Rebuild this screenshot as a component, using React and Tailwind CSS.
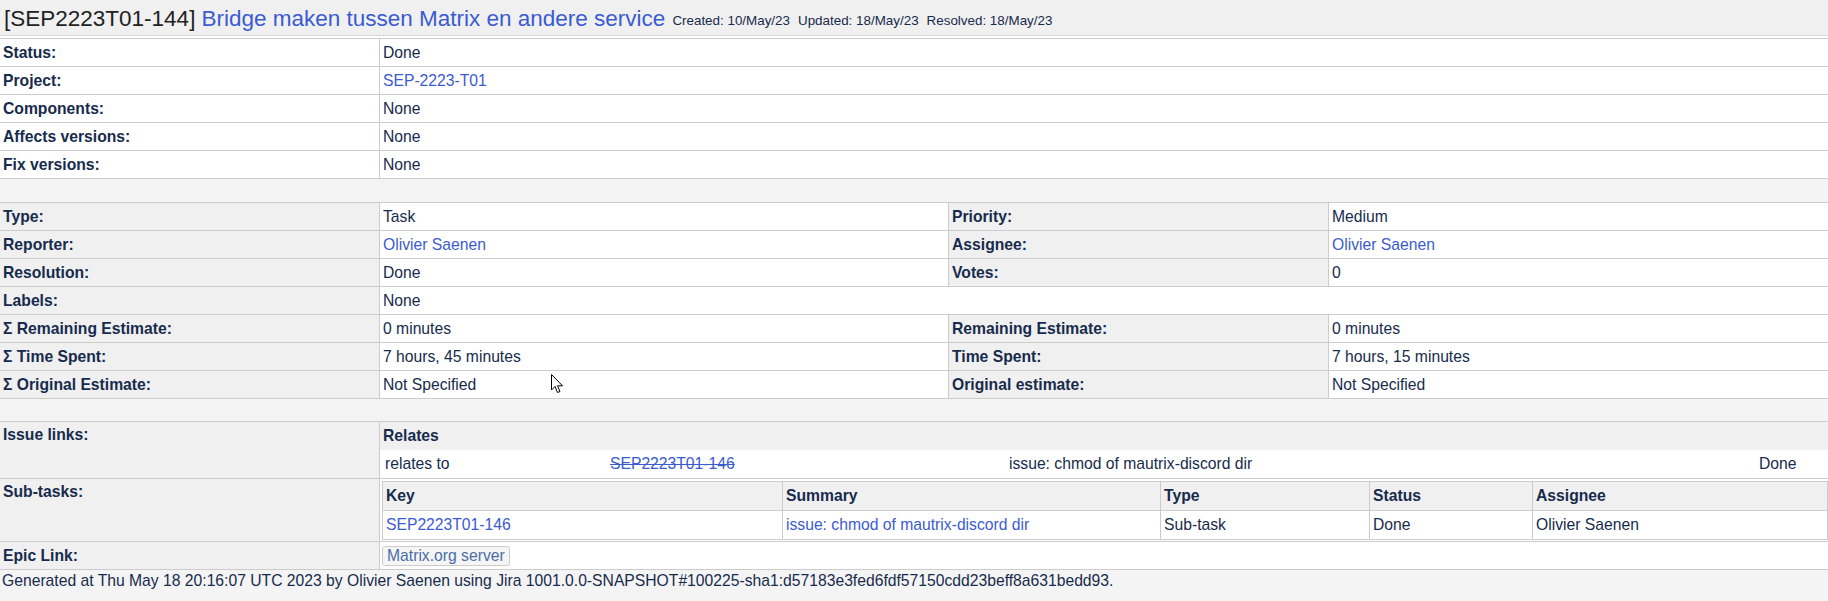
import React from "react";

const LINK = "text-[#3b5bd0]";
const BORDER = "border-[#cccccc]";

function Row1({ label, value, link }) {
  return (
    <div className={`grid grid-cols-[380px_1fr] h-[28px] border-b ${BORDER} bg-white`}>
      <div className={`border-r ${BORDER} px-[3px] flex items-center font-bold`}>{label}</div>
      <div className={`px-[3px] flex items-center ${link ? LINK : ""}`}>{value}</div>
    </div>
  );
}

function Row2({ l1, v1, l2, v2, link1, link2 }) {
  return (
    <div className={`grid grid-cols-[380px_569px_380px_1fr] h-[28px] border-b ${BORDER}`}>
      <div className={`border-r ${BORDER} bg-[#f0f0f0] px-[3px] flex items-center font-bold`}>{l1}</div>
      {l2 === undefined ? (
        <div className="col-span-3 bg-white px-[3px] flex items-center">{v1}</div>
      ) : (
        <>
          <div className={`border-r ${BORDER} bg-white px-[3px] flex items-center ${link1 ? LINK : ""}`}>{v1}</div>
          <div className={`border-r ${BORDER} bg-[#f0f0f0] px-[3px] flex items-center font-bold`}>{l2}</div>
          <div className={`bg-white px-[3px] flex items-center ${link2 ? LINK : ""}`}>{v2}</div>
        </>
      )}
    </div>
  );
}

export default function App() {
  return (
    <div className="relative w-[1828px] h-[601px] overflow-hidden bg-[#f4f4f4] text-[15.7px] leading-[20px] text-[#172b4d] font-['Liberation_Sans',Arial,sans-serif]">
      {/* Header */}
      <div className="h-[36px] bg-[#f0f0f0] border-b border-[#d9d9d9] flex items-center pt-[2px] px-[4px] whitespace-nowrap">
        <span className="text-[22.5px] leading-[26px] text-[#222]">[SEP2223T01-144]</span>
        <span className={`text-[22.5px] leading-[26px] ml-[6px] ${LINK}`}>Bridge maken tussen Matrix en andere service</span>
        <span className="text-[13.4px] leading-[26px] ml-[7px] translate-y-[2px] text-[#172b4d]">Created: 10/May/23</span>
        <span className="text-[13.4px] leading-[26px] ml-[8px] translate-y-[2px] text-[#172b4d]">Updated: 18/May/23</span>
        <span className="text-[13.4px] leading-[26px] ml-[8px] translate-y-[2px] text-[#172b4d]">Resolved: 18/May/23</span>
      </div>
      <div className="h-[2px] bg-white" />

      {/* Section 1 */}
      <div className={`border-t ${BORDER}`}>
        <Row1 label="Status:" value="Done" />
        <Row1 label="Project:" value="SEP-2223-T01" link />
        <Row1 label="Components:" value="None" />
        <Row1 label="Affects versions:" value="None" />
        <Row1 label="Fix versions:" value="None" />
      </div>

      <div className="h-[23px]" />

      {/* Section 2 */}
      <div className={`border-t ${BORDER}`}>
        <Row2 l1="Type:" v1="Task" l2="Priority:" v2="Medium" />
        <Row2 l1="Reporter:" v1="Olivier Saenen" link1 l2="Assignee:" v2="Olivier Saenen" link2 />
        <Row2 l1="Resolution:" v1="Done" l2="Votes:" v2="0" />
        <Row2 l1="Labels:" v1="None" />
        <Row2 l1="Σ Remaining Estimate:" v1="0 minutes" l2="Remaining Estimate:" v2="0 minutes" />
        <Row2 l1="Σ Time Spent:" v1="7 hours, 45 minutes" l2="Time Spent:" v2="7 hours, 15 minutes" />
        <Row2 l1="Σ Original Estimate:" v1="Not Specified" l2="Original estimate:" v2="Not Specified" />
      </div>

      <div className="h-[22px]" />

      {/* Section 3 */}
      <div className={`border-t ${BORDER}`}>
        {/* Issue links */}
        <div className={`grid grid-cols-[380px_1fr] h-[57px] border-b ${BORDER}`}>
          <div className={`border-r ${BORDER} bg-[#f0f0f0] px-[3px] pt-[3px] font-bold`}>Issue links:</div>
          <div className="flex flex-col">
            <div className="h-[28px] bg-[#f0f0f0] px-[3px] flex items-center font-bold">Relates</div>
            <div className="h-[28px] bg-white grid grid-cols-[227px_399px_750px_1fr] items-center">
              <div className="px-[5px]">relates to</div>
              <div className={`px-[3px] line-through ${LINK}`}>SEP2223T01-146</div>
              <div className="px-[3px]">issue: chmod of mautrix-discord dir</div>
              <div className="px-[3px]">Done</div>
            </div>
          </div>
        </div>

        {/* Sub-tasks */}
        <div className={`grid grid-cols-[380px_1fr] h-[63px] border-b ${BORDER}`}>
          <div className={`border-r ${BORDER} bg-[#f0f0f0] px-[3px] pt-[3px] font-bold`}>Sub-tasks:</div>
          <div className="bg-white pt-[2px] pl-[2px]">
            <div className={`border ${BORDER} bg-white`}>
              <div className={`grid grid-cols-[400px_378px_209px_163px_1fr] h-[29px] border-b ${BORDER} bg-[#f0f0f0] font-bold`}>
                <div className={`border-r ${BORDER} px-[3px] flex items-center`}>Key</div>
                <div className={`border-r ${BORDER} px-[3px] flex items-center`}>Summary</div>
                <div className={`border-r ${BORDER} px-[3px] flex items-center`}>Type</div>
                <div className={`border-r ${BORDER} px-[3px] flex items-center`}>Status</div>
                <div className="px-[3px] flex items-center">Assignee</div>
              </div>
              <div className="grid grid-cols-[400px_378px_209px_163px_1fr] h-[28px]">
                <div className={`border-r ${BORDER} px-[3px] flex items-center ${LINK}`}>SEP2223T01-146</div>
                <div className={`border-r ${BORDER} px-[3px] flex items-center ${LINK}`}>issue: chmod of mautrix-discord dir</div>
                <div className={`border-r ${BORDER} px-[3px] flex items-center`}>Sub-task</div>
                <div className={`border-r ${BORDER} px-[3px] flex items-center`}>Done</div>
                <div className="px-[3px] flex items-center">Olivier Saenen</div>
              </div>
            </div>
          </div>
        </div>

        {/* Epic link */}
        <div className={`grid grid-cols-[380px_1fr] h-[28px] border-b ${BORDER}`}>
          <div className={`border-r ${BORDER} bg-[#f0f0f0] px-[3px] flex items-center font-bold`}>Epic Link:</div>
          <div className="bg-white pl-[2px] flex items-center">
            <span className="h-[20px] leading-[18px] flex items-center px-[4px] border border-[#cccccc] rounded-[3px] bg-[#f5f5f5] text-[#4a6ea8]">
              Matrix.org server
            </span>
          </div>
        </div>
      </div>

      {/* Footer */}
      <div className="px-[2px] pt-[1px] whitespace-nowrap">
        Generated at Thu May 18 20:16:07 UTC 2023 by Olivier Saenen using Jira 1001.0.0-SNAPSHOT#100225-sha1:d57183e3fed6fdf57150cdd23beff8a631bedd93.
      </div>

      {/* Mouse cursor */}
      <svg className="absolute left-[551px] top-[374px]" width="13" height="20" viewBox="0 0 13 20">
        <path d="M0.5 0.5 L0.5 16 L4 12.5 L6.5 18.5 L9 17.5 L6.5 11.8 L11.5 11.8 Z" fill="#ffffff" stroke="#000000" strokeWidth="1" strokeLinejoin="miter" />
      </svg>
    </div>
  );
}
